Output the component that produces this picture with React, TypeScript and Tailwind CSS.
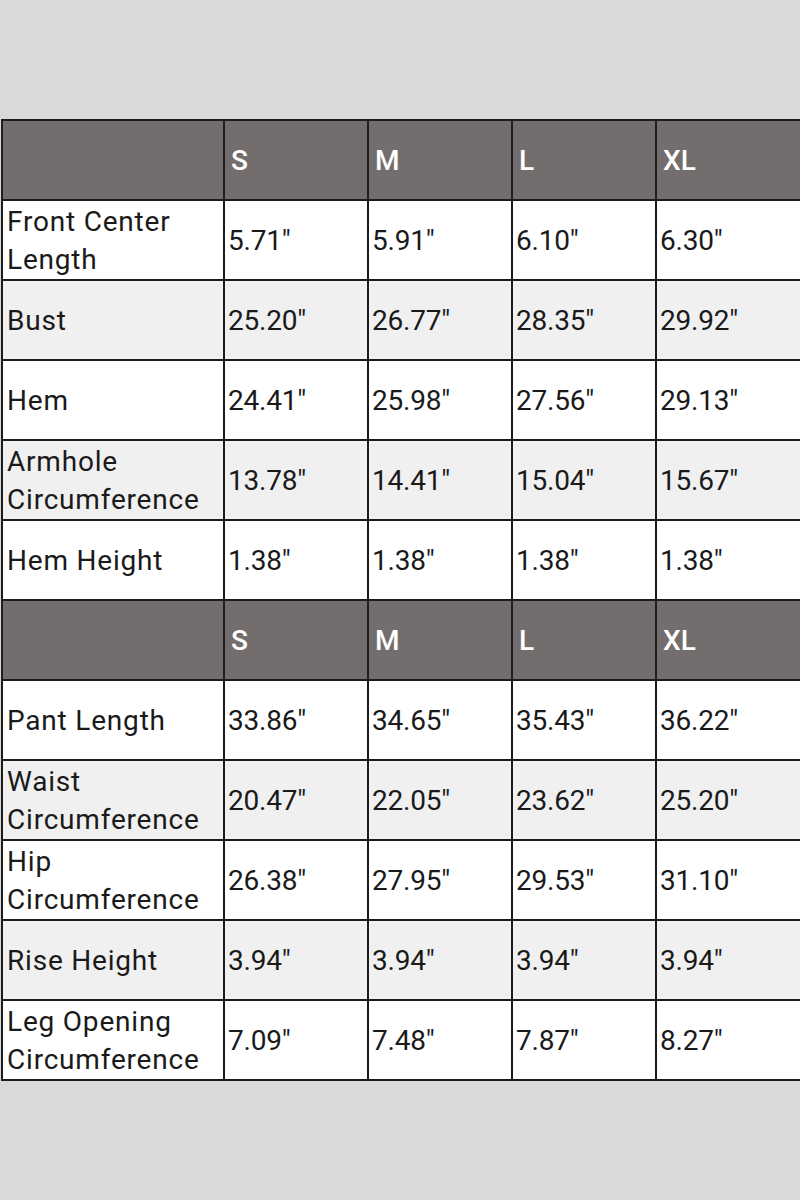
import React from "react";

const top = [
  ["Front Center Length", "5.71\"", "5.91\"", "6.10\"", "6.30\""],
  ["Bust", "25.20\"", "26.77\"", "28.35\"", "29.92\""],
  ["Hem", "24.41\"", "25.98\"", "27.56\"", "29.13\""],
  ["Armhole Circumference", "13.78\"", "14.41\"", "15.04\"", "15.67\""],
  ["Hem Height", "1.38\"", "1.38\"", "1.38\"", "1.38\""],
];
const bottom = [
  ["Pant Length", "33.86\"", "34.65\"", "35.43\"", "36.22\""],
  ["Waist Circumference", "20.47\"", "22.05\"", "23.62\"", "25.20\""],
  ["Hip Circumference", "26.38\"", "27.95\"", "29.53\"", "31.10\""],
  ["Rise Height", "3.94\"", "3.94\"", "3.94\"", "3.94\""],
  ["Leg Opening Circumference", "7.09\"", "7.48\"", "7.87\"", "8.27\""],
];

function Header() {
  return (
    <tr className="h-[80px] bg-[#736e6d] text-white">
      <td className="border-2 border-[#1c1c1c]"></td>
      {["S", "M", "L", "XL"].map((s) => (
        <td key={s} className="border-2 border-[#1c1c1c] px-[6px] pt-[2px] align-middle font-medium text-[28px]">{s}</td>
      ))}
    </tr>
  );
}

function Rows({ rows }: { rows: string[][] }) {
  return (
    <>
      {rows.map((r, i) => (
        <tr key={r[0]} className={`h-[80px] ${i % 2 === 1 ? "bg-[#f0f0f0]" : "bg-white"} text-[#1a1a1a]`}>
          {r.map((c, j) => (
            <td
              key={j}
              className={`border-2 border-[#1c1c1c] align-middle pt-[2px] ${j === 0 ? "pl-[4px] pr-[2px] leading-[38px] text-[28px] tracking-[0.8px]" : "px-[3px] text-[28px] tracking-[-0.2px]"}`}
            >
              {c}
            </td>
          ))}
        </tr>
      ))}
    </>
  );
}

export default function App() {
  return (
    <div className="w-[800px] h-[1200px] bg-[#d9d9d9] pt-[119px]" style={{ fontFamily: "Roboto, 'Liberation Sans', sans-serif" }}>
      <table className="w-[799px] border-collapse table-fixed ml-[1px]">
        <colgroup>
          <col className="w-[222px]" />
          <col className="w-[144px]" />
          <col className="w-[144px]" />
          <col className="w-[144px]" />
          <col className="w-[145px]" />
        </colgroup>
        <tbody>
          <Header />
          <Rows rows={top} />
          <Header />
          <Rows rows={bottom} />
        </tbody>
      </table>
    </div>
  );
}
